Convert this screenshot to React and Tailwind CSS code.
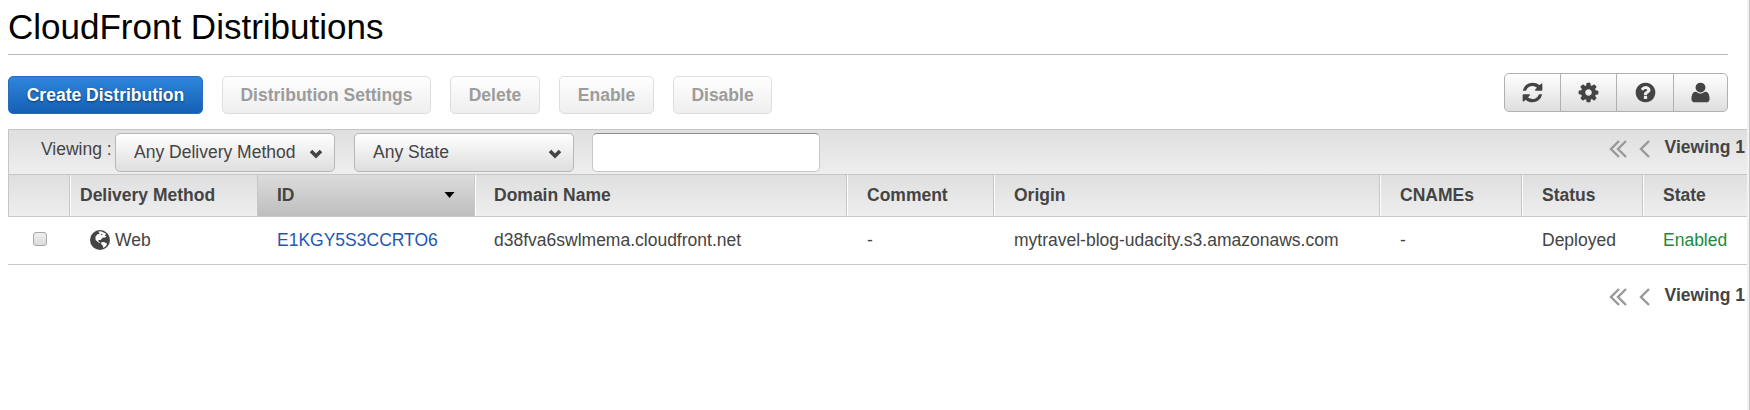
const icons = {
  refresh: "M1639 1056q0 5-1 7-64 268-268 434.5t-478 166.5q-146 0-282.5-55t-243.5-157l-129 129q-19 19-45 19t-45-19-19-45v-448q0-26 19-45t45-19h448q26 0 45 19t19 45-19 45l-137 137q71 66 161 102t187 36q134 0 250-65t186-179q11-17 53-117 8-23 30-23h192q13 0 22.5 9.5t9.5 22.5zm25-800v448q0 26-19 45t-45 19h-448q-26 0-45-19t-19-45 19-45l138-138q-148-137-349-137-134 0-250 65t-186 179q-11 17-53 117-8 23-30 23h-199q-13 0-22.5-9.5t-9.5-22.5v-7q65-268 270-434.5t480-166.5q146 0 284 55.5t245 156.5l130-129q19-19 45-19t45 19 19 45z",
  cog: "M1152 896q0-106-75-181t-181-75-181 75-75 181 75 181 181 75 181-75 75-181zm512-109v222q0 12-8 23t-20 13l-185 28q-19 54-39 91 35 50 107 138 10 12 10 25t-9 23q-27 37-99 108t-94 71q-12 0-26-9l-138-108q-44 23-91 38-16 136-29 186-7 28-36 28h-222q-14 0-24.5-8.5t-11.5-21.5l-28-184q-49-16-90-37l-141 107q-10 9-25 9-14 0-25-11-126-114-165-168-7-10-7-23 0-12 8-23 15-21 51-66.5t54-70.5q-27-50-41-99l-183-27q-13-2-21-12.5t-8-23.5v-222q0-12 8-23t19-13l186-28q14-46 39-92-40-57-107-138-10-12-10-24 0-10 9-23 26-36 98.5-107.5t94.5-71.5q13 0 26 10l138 107q44-23 91-38 16-136 29-186 7-28 36-28h222q14 0 24.5 8.5t11.5 21.5l28 184q49 16 90 37l142-107q9-9 24-9 13 0 25 10 129 119 165 170 7 8 7 22 0 12-8 23-15 21-51 66.5t-54 70.5q26 50 41 98l183 28q13 2 21 12.5t8 23.5z",
  help: "M1024 1376v-192q0-14-9-23t-23-9h-192q-14 0-23 9t-9 23v192q0 14 9 23t23 9h192q14 0 23-9t9-23zm256-672q0-88-55.5-163t-138.5-116-170-41q-243 0-371 213-15 24 8 42l132 100q7 6 19 6 16 0 25-12 53-68 86-92 34-24 86-24 48 0 85.5 26t37.5 59q0 38-20 61t-68 45q-63 28-115.5 86.5t-52.5 125.5v36q0 14 9 23t23 9h192q14 0 23-9t9-23q0-19 21.5-49.5t54.5-49.5q32-18 49-28.5t46-35 44.5-48 28-60.5 12.5-81zm384 192q0 209-103 385.5t-279.5 279.5-385.5 103-385.5-103-279.5-279.5-103-385.5 103-385.5 279.5-279.5 385.5-103 385.5 103 279.5 279.5 103 385.5z",
  user: "M1600 1405q0 120-73 189.5t-194 69.5h-874q-121 0-194-69.5t-73-189.5q0-53 3.5-103.5t14-109 26.5-108.5 43-97.5 62-81 85.5-53.5 111.5-20q9 0 42 21.5t74.5 48 108 48 133.5 21.5 133.5-21.5 108-48 74.5-48 42-21.5q61 0 111.5 20t85.5 53.5 62 81 43 97.5 26.5 108.5 14 109 3.5 103.5zm-320-893q0 159-112.5 271.5t-271.5 112.5-271.5-112.5-112.5-271.5 112.5-271.5 271.5-112.5 271.5 112.5 112.5 271.5z",
};

function Icon({ name }) {
  return (
    <svg viewBox="0 0 1792 1792" className="size-[23px] fill-[#444]">
      <path d={icons[name]} />
    </svg>
  );
}

function Disabled({ children, className }) {
  return (
    <button className={`h-[38px] shrink-0 rounded-[5px] border border-[#dedede] bg-linear-to-b from-white to-[#eeeeee] pb-px text-center font-bold text-[#9c9c9c] ${className}`}>
      {children}
    </button>
  );
}

function Select({ children, className }) {
  return (
    <div className={`flex h-[39px] w-[220px] shrink-0 items-center justify-between rounded-[5px] border border-[#b7b7b7] bg-linear-to-b from-white to-[#dedede] pr-[11px] pl-[18px] ${className}`}>
      <span className="mt-[-2px] whitespace-nowrap">{children}</span>
      <svg viewBox="0 0 14 10" className="mt-[3px] h-[10px] w-[14px] shrink-0">
        <path d="M2 2 7 7 12 2" fill="none" stroke="#444" strokeWidth="3.6" />
      </svg>
    </div>
  );
}

function Pager({ className }) {
  return (
    <div className={`flex shrink-0 items-center ${className}`}>
      <svg viewBox="0 0 42 18" className="mt-[3px] mr-[14px] h-[18px] w-[42px] shrink-0" fill="none" stroke="#999" strokeWidth="2.4">
        <path d="M10 1 2 9l8 8M17 1 9 9l8 8M40 1l-8 8 8 8" />
      </svg>
      <b className="whitespace-nowrap">Viewing 1</b>
    </div>
  );
}

const grid = "grid grid-cols-[61px_188px_217px_372px_147px_386px_142px_121px_1fr]";
const cell = "flex items-center border-r border-[#c6c6c6] pb-[2px] pl-[20px] shadow-[1px_0_0_#fff]";

export default function App() {
  return (
    <div className="flex h-[410px] w-[1750px] overflow-hidden bg-white font-['Liberation_Sans',Arial,sans-serif] text-[17.5px] leading-[22px] text-[#444]">
      <main className="w-[1747px] shrink-0 pl-2">
        <h1 className="h-[55px] w-[1720px] border-b border-[#b7b7b7] pt-[7px] text-[35px] leading-[40px] text-black">CloudFront Distributions</h1>
        <div className="flex h-[74px] items-start pt-[21px]">
          <button className="h-[38px] w-[195px] shrink-0 rounded-[5px] border border-[#2a6cb8] bg-linear-to-b from-[#2e86dc] to-[#1560b5] pb-px font-bold text-white [text-shadow:0_1px_2px_#00000080]">Create Distribution</button>
          <Disabled className="ml-[19px] w-[209px]">Distribution Settings</Disabled>
          <Disabled className="ml-[19px] w-[90px]">Delete</Disabled>
          <Disabled className="ml-[19px] w-[95px]">Enable</Disabled>
          <Disabled className="ml-[19px] w-[99px]">Disable</Disabled>
          <div className="mt-[-3px] mr-[19px] ml-auto grid h-[39px] w-[224px] grid-cols-[56px_56px_57px_1fr] divide-x divide-[#b0b0b0] rounded-[5px] border border-[#b0b0b0] bg-linear-to-b from-white to-[#dedede] *:flex *:items-center *:justify-center">
            <button><Icon name="refresh" /></button>
            <button><Icon name="cog" /></button>
            <button><Icon name="help" /></button>
            <button><Icon name="user" /></button>
          </div>
        </div>
        <section className="border-l border-[#c6c6c6]">
          <div className="flex h-[46px] items-start border-t border-b border-[#c6c6c6] bg-linear-to-b from-[#dfdfdf] to-[#eeeeee] pt-[3px]">
            <span className="mt-[5px] ml-[32px] w-[74px] shrink-0 whitespace-nowrap">Viewing :</span>
            <Select>Any Delivery Method</Select>
            <Select className="ml-[19px]">Any State</Select>
            <input className="ml-[18px] h-[39px] w-[228px] rounded-[5px] border border-[#c6c6c6] border-t-[#8c8c8c] bg-white" />
            <Pager className="mt-[3px] mr-[2px] ml-auto" />
          </div>
          <div className={`${grid} h-[42px] border-b border-[#c6c6c6] bg-linear-to-b from-[#dfdfdf] to-[#eeeeee] font-bold`}>
            <div className={cell} />
            <div className="flex items-center border-r border-[#c6c6c6] pb-[2px] pl-[10px] shadow-[1px_0_0_#fff]">Delivery Method</div>
            <div className="flex items-center justify-between border-r border-[#c6c6c6] bg-linear-to-b from-[#dcdcdc] to-[#bebebe] pr-[19px] pb-[2px] pl-[19px] shadow-[1px_0_0_#fff]">
              ID
              <svg viewBox="0 0 10 6" className="h-[6px] w-[11px]"><path d="M0 0h10L5 6z" /></svg>
            </div>
            <div className="flex items-center border-r border-[#c6c6c6] pb-[2px] pl-[19px] shadow-[1px_0_0_#fff]">Domain Name</div>
            <div className={cell}>Comment</div>
            <div className={cell}>Origin</div>
            <div className={cell}>CNAMEs</div>
            <div className={cell}>Status</div>
            <div className="flex items-center pb-[2px] pl-[20px]">State</div>
          </div>
        </section>
        <div className={`${grid} h-[48px] items-center border-b border-[#c6c6c6] pb-px pl-px`}>
          <div className="pb-[2px] pl-[24px]"><div className="size-[14px] rounded-[3px] border border-[#a8a8a8] bg-linear-to-b from-[#eee] to-[#dcdcdc]" /></div>
          <div className="flex items-center pl-[20px]">
            <svg viewBox="0 0 20 20" className="mr-[5px] size-[20px]">
              <circle cx="10" cy="10" r="10" fill="#444" />
              <path d="M8.3 1.6 11 1.2l5.2 2.6-1.4 1.7 2 .9-1.9 1.2-2.4.1-1.8 2.2-2 .1-.5 1.3 1.2.9 1.9 1-2.5-.4-3.2-2.8-.2-3.2 2-2.5 2.3-.6z" fill="#fff" />
              <path d="m11.4 12.2 2.7-.2 3.1 1.8-1.2 2.3-2.6 1.9-.7-2.5-1.6-1.5z" fill="#fff" />
              <path d="m11 3.4 1.8 1-1.2 1.1z" fill="#444" />
            </svg>
            Web
          </div>
          <div className="pl-[19px] text-[#1f58b0]">E1KGY5S3CCRTO6</div>
          <div className="pl-[19px]">d38fva6swlmema.cloudfront.net</div>
          <div className="pl-[20px]">-</div>
          <div className="pl-[20px]">mytravel-blog-udacity.s3.amazonaws.com</div>
          <div className="pl-[20px]">-</div>
          <div className="pl-[20px]">Deployed</div>
          <div className="pl-[20px] text-[#1d8a3c]">Enabled</div>
        </div>
        <Pager className="mt-[19px] mr-[2px] justify-end" />
      </main>
      <div className="w-[3px] shrink-0 border-r border-[#c6c6c6] bg-[#f2f2f2]" />
    </div>
  );
}
